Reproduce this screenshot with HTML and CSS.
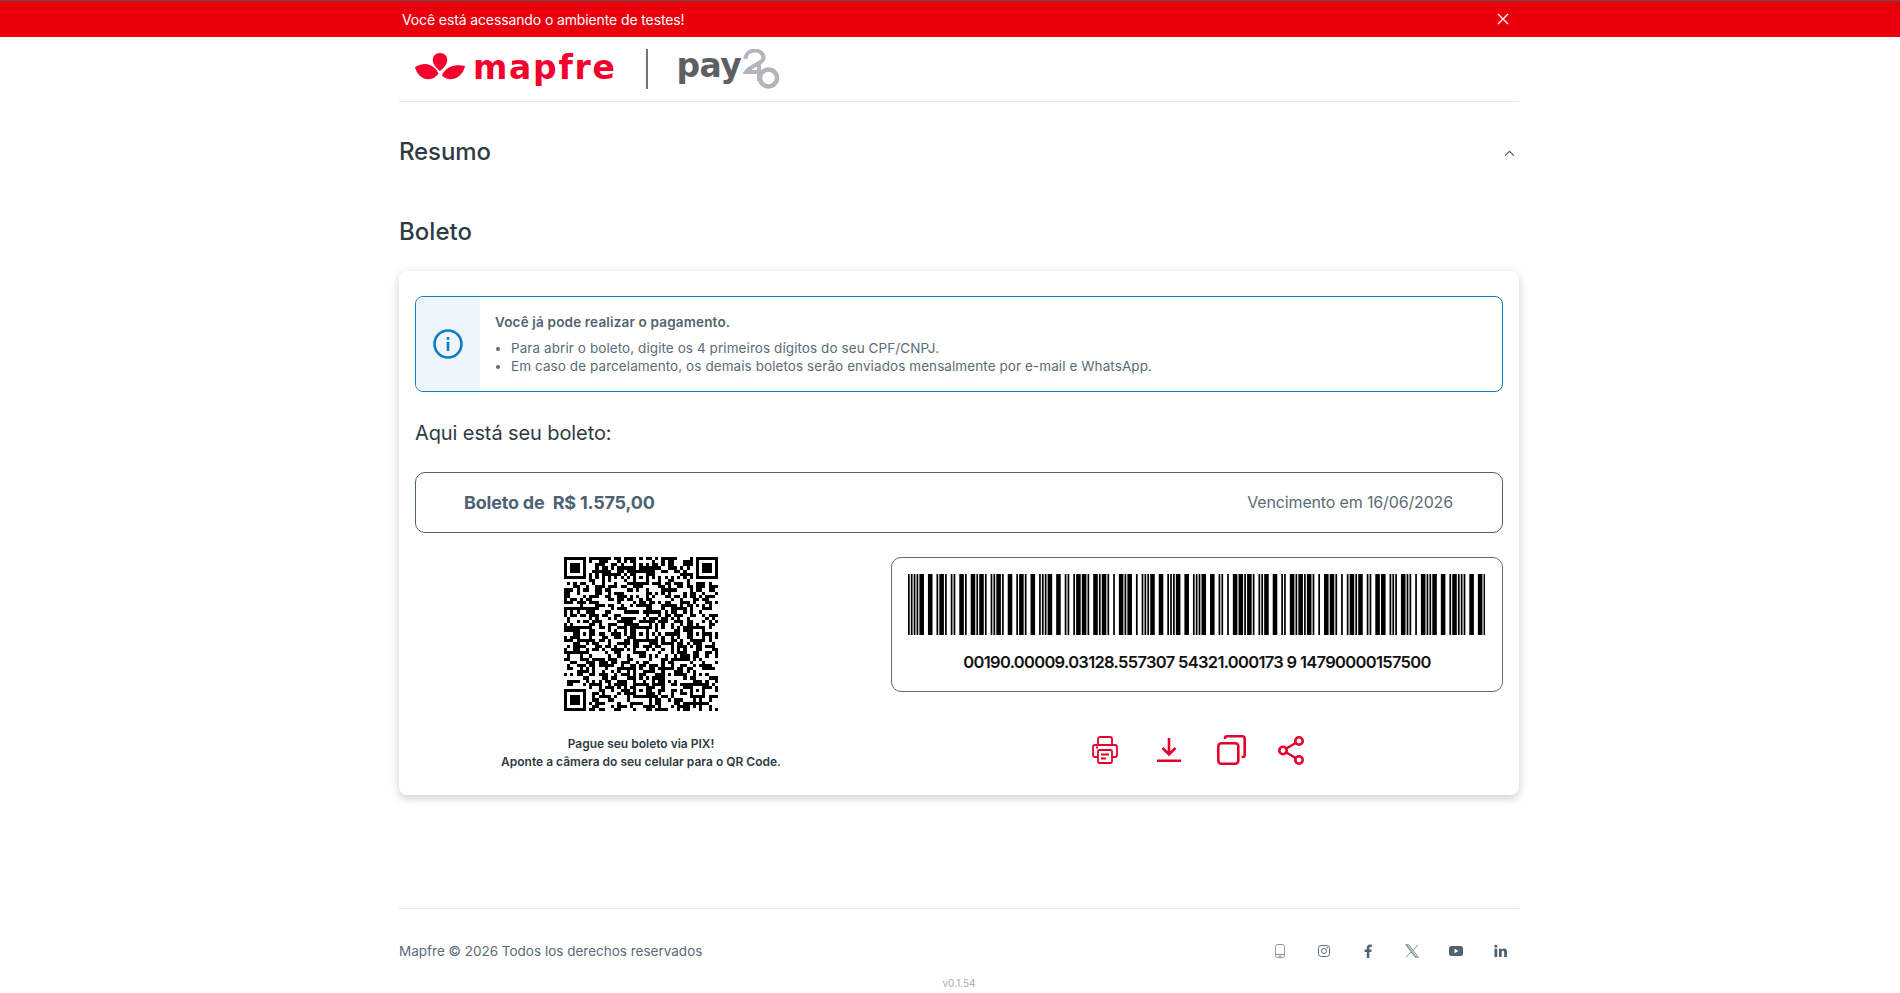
FILE: index.html
```html
<!DOCTYPE html>
<html lang="pt-BR">
<head>
<meta charset="utf-8">
<title>Mapfre Pay2b</title>
<link rel="stylesheet" href="styles.css">
</head>
<body>
<div class="alert-bar">
  <div class="alert-inner">
    <span>Você está acessando o ambiente de testes!</span>
    <svg class="alert-close" viewBox="0 0 12 12" width="12" height="12"><path d="M1 1l10 10M11 1L1 11" stroke="#fff" stroke-width="1.2" fill="none"/></svg>
  </div>
</div>
<div class="page">
  <header class="logo-row">
    <svg class="flower" viewBox="0 0 50 27" width="50" height="27">
      <path fill="#f5002d" d="M25 0c5.500 0 8 4.500 7 9-.8 3.500-3.800 6.500-7 9-3.200-2.500-6.200-5.500-7-9-1-4.500 1.500-9 7-9z"/>
      <path fill="#f5002d" d="M0 14.500c4-3.500 10-4.500 15-2.500 3.800 1.500 7 4.500 8.500 8.500-2.500 4-7.500 6.500-12.500 5.500C5.500 25 1.500 20 0 14.500z"/>
      <path fill="#f5002d" d="M50 13c-1.500 6.500-6 12-12.500 13-4 .6-8-.8-10.500-3.500 1.500-4.500 5.500-8 10.500-9.500 4.500-1.300 9-1 12.500 0z"/>
    </svg>
    <span class="brand">mapfre</span>
    <span class="logo-divider"></span>
    <span class="pay">pay</span>
    <svg class="twob" viewBox="0 0 36 40" width="36" height="40" fill="none" stroke="#b2b6b8" stroke-width="4">
      <path d="M2.500 10C3-1 20.500-1 20.500 9c0 5-13.500 8-17.500 14h13"/>
      <path d="M16 13v19"/>
      <circle cx="25.500" cy="29" r="8.500" stroke-width="4.500"/>
    </svg>
  </header>
  <section class="resumo-row">
    <h2 class="resumo">Resumo</h2>
    <svg class="chevron" viewBox="0 0 12 8" width="11" height="7"><path d="M1 6.500l5-5 5 5" fill="none" stroke="#4a5b68" stroke-width="1.300"/></svg>
  </section>
  <h2 class="boleto-title">Boleto</h2>
  <main class="card">
    <div class="info">
      <div class="info-side">
        <svg viewBox="0 0 30 30" width="30" height="30"><circle cx="15" cy="15" r="13.500" fill="none" stroke="#0a7ebf" stroke-width="2.600"/><rect x="13.700" y="13" width="2.600" height="9" fill="#0a7ebf"/><rect x="13.700" y="8" width="2.600" height="2.800" fill="#0a7ebf"/></svg>
      </div>
      <div class="info-body">
        <p class="info-head">Você já pode realizar o pagamento.</p>
        <ul class="info-list">
          <li>Para abrir o boleto, digite os 4 primeiros dígitos do seu CPF/CNPJ.</li>
          <li>Em caso de parcelamento, os demais boletos serão enviados mensalmente por e-mail e WhatsApp.</li>
        </ul>
      </div>
    </div>
    <h3 class="here">Aqui está seu boleto:</h3>
    <div class="amount">
      <span class="amount-value">Boleto de&nbsp; R$ 1.575,00</span>
      <span class="amount-due">Vencimento em 16/06/2026</span>
    </div>
    <div class="pay-grid">
      <div class="pix">
        <svg id="qr" class="qr" viewBox="0 0 49 49" width="154" height="154" shape-rendering="crispEdges"></svg>
        <p class="pix-text">Pague seu boleto via PIX!<br>Aponte a câmera do seu celular para o QR Code.</p>
      </div>
      <div class="bar-col">
        <div class="bar-box">
          <svg id="barcode" class="barcode" viewBox="0 0 405 61" width="577" height="61" preserveAspectRatio="none"></svg>
          <p class="bar-digits">00190.00009.03128.557307 54321.000173 9 14790000157500</p>
        </div>
        <div class="actions">
          <span class="action"><svg viewBox="0 0 26 28" width="26" height="28" fill="none" stroke="#e4002b" stroke-width="1.800" stroke-linejoin="round"><path d="M6 9V3a2 2 0 0 1 2-2h10a2 2 0 0 1 2 2v6"/><path d="M6 21H3a2 2 0 0 1-2-2v-8a2 2 0 0 1 2-2h20a2 2 0 0 1 2 2v8a2 2 0 0 1-2 2h-3"/><rect x="6" y="14" width="14" height="13" rx="1.500"/><path d="M9 18.500h8M9 22.500h5M4 11.500h2"/></svg></span>
          <span class="action"><svg viewBox="0 0 24 24" width="24" height="24" fill="none" stroke="#e4002b" stroke-width="2.600"><path d="M12 0v16M5.500 10l6.500 6.500 6.500-6.500"/><path d="M0 22.800h24"/></svg></span>
          <span class="action"><svg viewBox="0 0 29 30" width="29" height="30" fill="none" stroke="#e4002b" stroke-width="2.600" stroke-linecap="round"><rect x="1.300" y="8.300" width="20" height="20.400" rx="3"/><path d="M8 3a2 2 0 0 1 2-1.700h15.500a2.200 2.200 0 0 1 2.200 2.200V20a2 2 0 0 1-2 2"/></svg></span>
          <span class="action"><svg viewBox="0 0 26 29" width="26" height="29" fill="none" stroke="#e4002b" stroke-width="2.600"><circle cx="21" cy="5" r="3.700"/><circle cx="5" cy="14.500" r="3.700"/><circle cx="21" cy="24" r="3.700"/><path d="M8.300 12.500l9.400-5.500M8.300 16.500l9.400 5.500"/></svg></span>
        </div>
      </div>
    </div>
  </main>
  <footer class="footer">
    <div class="footer-row">
      <span class="copy">Mapfre © 2026 Todos los derechos reservados</span>
      <div class="social">
        <span class="soc"><svg viewBox="0 0 10 14" width="10" height="14" fill="none" stroke="#8a969e" stroke-width="1"><rect x=".5" y=".5" width="9" height="13" rx="2.200"/><path d="M.5 10.500h9M3.500 12h3"/></svg></span>
        <span class="soc"><svg viewBox="0 0 12 12" width="12" height="12" fill="none" stroke="#5c6e7b" stroke-width="1"><rect x=".5" y=".5" width="11" height="11" rx="2.800"/><circle cx="6" cy="6" r="2.500"/><circle cx="9.200" cy="2.800" r=".4" fill="#5c6e7b"/></svg></span>
        <span class="soc"><svg viewBox="0 0 8 14" width="8" height="14"><path fill="#4f6271" d="M5.300 14V8h2l.4-2.400H5.300V4.200c0-.7.300-1.200 1.300-1.200h1.200V.8C7.500.7 6.800.6 6 .6 4.100.6 2.800 1.800 2.800 3.900v1.700H.6V8h2.200v6z"/></svg></span>
        <span class="soc"><svg viewBox="0 0 14 14" width="14" height="14" fill="none" stroke="#5c6e7b" stroke-width=".8"><path d="M.8.800h3l9.400 12.400h-3zM13 .8L8 6.500M6 8.200L1 13.200M2 .8l9.200 12.400"/></svg></span>
        <span class="soc"><svg viewBox="0 0 14 10" width="14" height="10"><rect width="14" height="10" rx="2.500" fill="#4f6271"/><path d="M5.500 2.800v4.400L9.400 5z" fill="#fff"/></svg></span>
        <span class="soc"><svg viewBox="0 0 14 14" width="13" height="14" fill="#4f6271"><rect x=".5" y="4.500" width="3" height="9"/><circle cx="2" cy="1.800" r="1.600"/><path d="M5.300 4.500h2.800v1.300c.5-.9 1.500-1.500 2.800-1.500 2.300 0 3.100 1.500 3.100 3.800v5.400h-3V8.600c0-1.100-.3-1.800-1.300-1.800s-1.500.8-1.500 1.800v4.900H5.300z"/></svg></span>
      </div>
    </div>
    <div class="version">v0.1.54</div>
  </footer>
</div>
<script src="script.js"></script>
</body>
</html>
```
FILE: styles.css
```css
* { box-sizing: border-box; }
html, body { margin: 0; padding: 0; background: #fff; }
body { font-family: Inter, "Open Sans", "Liberation Sans", sans-serif; color: #2d3942; height: 993px; overflow: hidden; }
h2, h3, p, ul { margin: 0; padding: 0; font-weight: 400; }
.alert-bar { height: 37px; background: #e8000d; border-top: 1px solid #555; color: #fff; font-size: 14px; letter-spacing: -.12px; }
.alert-inner { width: 1120px; height: 36px; margin-left: 399px; padding: 0 10px 0 3px; display: flex; align-items: center; justify-content: space-between; }
.page { width: 1120px; margin-left: 399px; }
.logo-row { height: 65px; border-bottom: 1px solid #e6e8ea; display: flex; align-items: flex-start; padding: 12px 0 0 16px; }
.flower { margin-top: 4px; }
.brand { font: 700 33px/38px "DejaVu Sans", sans-serif; color: #f5002d; letter-spacing: 1.700px; margin-left: 8px; height: 40px; }
.logo-divider { width: 2px; height: 40px; background: #6d767c; margin-left: 29px; }
.pay { font: 700 33px/33px "DejaVu Sans", sans-serif; color: #5d6063; margin-left: 29px; letter-spacing: -.6px; }
.twob { margin-left: 2px; }
.resumo-row { height: 98px; display: flex; align-items: center; justify-content: space-between; padding: 0 4px 0 0; }
.resumo { font-size: 24px; font-weight: 500; color: #2f3b44; letter-spacing: -.1px; }
.chevron { margin-top: 4px; }
.boleto-title { font-size: 24px; font-weight: 500; color: #2f3b44; height: 71px; line-height: 64px; letter-spacing: .05px; }
.card { background: #fff; border-radius: 8px; box-shadow: 0 3px 10px rgba(0,0,0,.2); height: 524px; padding: 25px 16px 0; }
.info { display: flex; height: 96px; border: 1px solid #0a7ebf; border-radius: 8px; overflow: hidden; }
.info-side { width: 64px; background: #edf4fb; display: flex; align-items: center; justify-content: center; }
.info-body { padding: 15px 15px; color: #5b6b77; font-size: 13.500px; }
.info-head { font-weight: 600; line-height: 20px; color: #55636f; letter-spacing: .17px; }
.info-list { list-style: disc; padding-left: 16px; margin-top: 7px; line-height: 18px; letter-spacing: .08px; }
.here { font-size: 20px; color: #2f3b44; line-height: 32px; margin-top: 25px; margin-bottom: 23px; letter-spacing: -.1px; }
.amount { height: 61px; border: 1px solid #4f6271; border-radius: 10px; padding: 0 49px 0 48px; display: flex; align-items: center; justify-content: space-between; }
.amount-value { font-size: 18px; font-weight: 700; color: #4f6271; letter-spacing: -.2px; }
.amount-due { font-size: 16px; color: #5b6b77; letter-spacing: -.15px; padding-bottom: 2px; }
.pay-grid { display: flex; margin-top: 24px; }
.pix { width: 452px; display: flex; flex-direction: column; align-items: center; }
.qr { display: block; }
.pix-text { margin-top: 24px; font-size: 12px; font-weight: 600; line-height: 18px; text-align: center; color: #2f3b44; }
.bar-col { width: 612px; margin-left: 24px; }
.bar-box { height: 135px; border: 1px solid #5b6b77; border-radius: 10px; padding: 16px 16px 0; }
.barcode { display: block; }
.bar-digits { font-size: 16.500px; font-weight: 600; letter-spacing: -.68px; color: #111; text-align: center; margin-top: 15px; line-height: 24px; }
.actions { display: grid; grid-template-columns: 66px 62px 62px 58px; justify-content: center; align-items: center; height: 32px; margin-top: 42px; padding-right: 2px; }
.action { display: flex; justify-content: center; align-items: center; }
.action svg { display: block; }
.footer { margin-top: 113px; border-top: 1px solid #e6e8ea; }
.footer-row { display: flex; align-items: center; justify-content: space-between; height: 84px; }
.copy { font-size: 13.500px; color: #5b6b77; }
.social { display: flex; gap: 20px; align-items: center; padding-right: 7px; }
.soc { width: 24px; display: flex; justify-content: center; align-items: center; }
.version { text-align: center; font-size: 10px; line-height: 16px; color: #a7adb2; margin-top: -18px; }
```
FILE: script.js
```js
(function () {
  var NS = 'http://www.w3.org/2000/svg';
  function rect(svg, x, y, w, h, fill) {
    var r = document.createElementNS(NS, 'rect');
    r.setAttribute('x', x); r.setAttribute('y', y);
    r.setAttribute('width', w); r.setAttribute('height', h);
    r.setAttribute('fill', fill || '#000');
    svg.appendChild(r);
  }
  // Interleaved 2 of 5 for the boleto's 44-digit code
  var code = '00199147900001575000000003128557305432100017';
  var pat = ['nnwwn','wnnnw','nwnnw','wwnnn','nnwnw','wnwnn','nwwnn','nnnww','wnnwn','nwnwn'];
  var seq = 'nnnn';
  for (var i = 0; i < code.length; i += 2) {
    var a = pat[+code[i]], b = pat[+code[i + 1]];
    for (var j = 0; j < 5; j++) seq += a[j] + b[j];
  }
  seq += 'wnn';
  var bar = document.getElementById('barcode'), x = 0;
  for (var k = 0; k < seq.length; k++) {
    var w = seq[k] === 'w' ? 3 : 1;
    if (k % 2 === 0) rect(bar, x, 0, w + 0.2, 61);
    x += w;
  }
  // QR matrix, 49 modules
  var qr = document.getElementById('qr'), n = 49, s = 20260616;
  function rnd() { s = (s * 1664525 + 1013904223) >>> 0; return (s >>> 16) / 65536; }
  function finder(fx, fy) {
    rect(qr, fx, fy, 7, 7); rect(qr, fx + 1, fy + 1, 5, 5, '#fff'); rect(qr, fx + 2, fy + 2, 3, 3);
  }
  function align(ax, ay) {
    rect(qr, ax - 2, ay - 2, 5, 5); rect(qr, ax - 1, ay - 1, 3, 3, '#fff'); rect(qr, ax, ay, 1, 1);
  }
  function reserved(c, r) {
    return (c < 8 && r < 8) || (c > n - 9 && r < 8) || (c < 8 && r > n - 9);
  }
  var centers = [6, 24, 42];
  for (var r = 0; r < n; r++) {
    for (var c = 0; c < n; c++) {
      if (reserved(c, r)) continue;
      var on = (r === 6 || c === 6) ? ((r + c) % 2 === 0) : rnd() < 0.5;
      if (on) rect(qr, c, r, 1, 1);
    }
  }
  finder(0, 0); finder(n - 7, 0); finder(0, n - 7);
  centers.forEach(function (ay) {
    centers.forEach(function (ax) {
      if (reserved(ax, ay)) return;
      align(ax, ay);
    });
  });
})();
```
